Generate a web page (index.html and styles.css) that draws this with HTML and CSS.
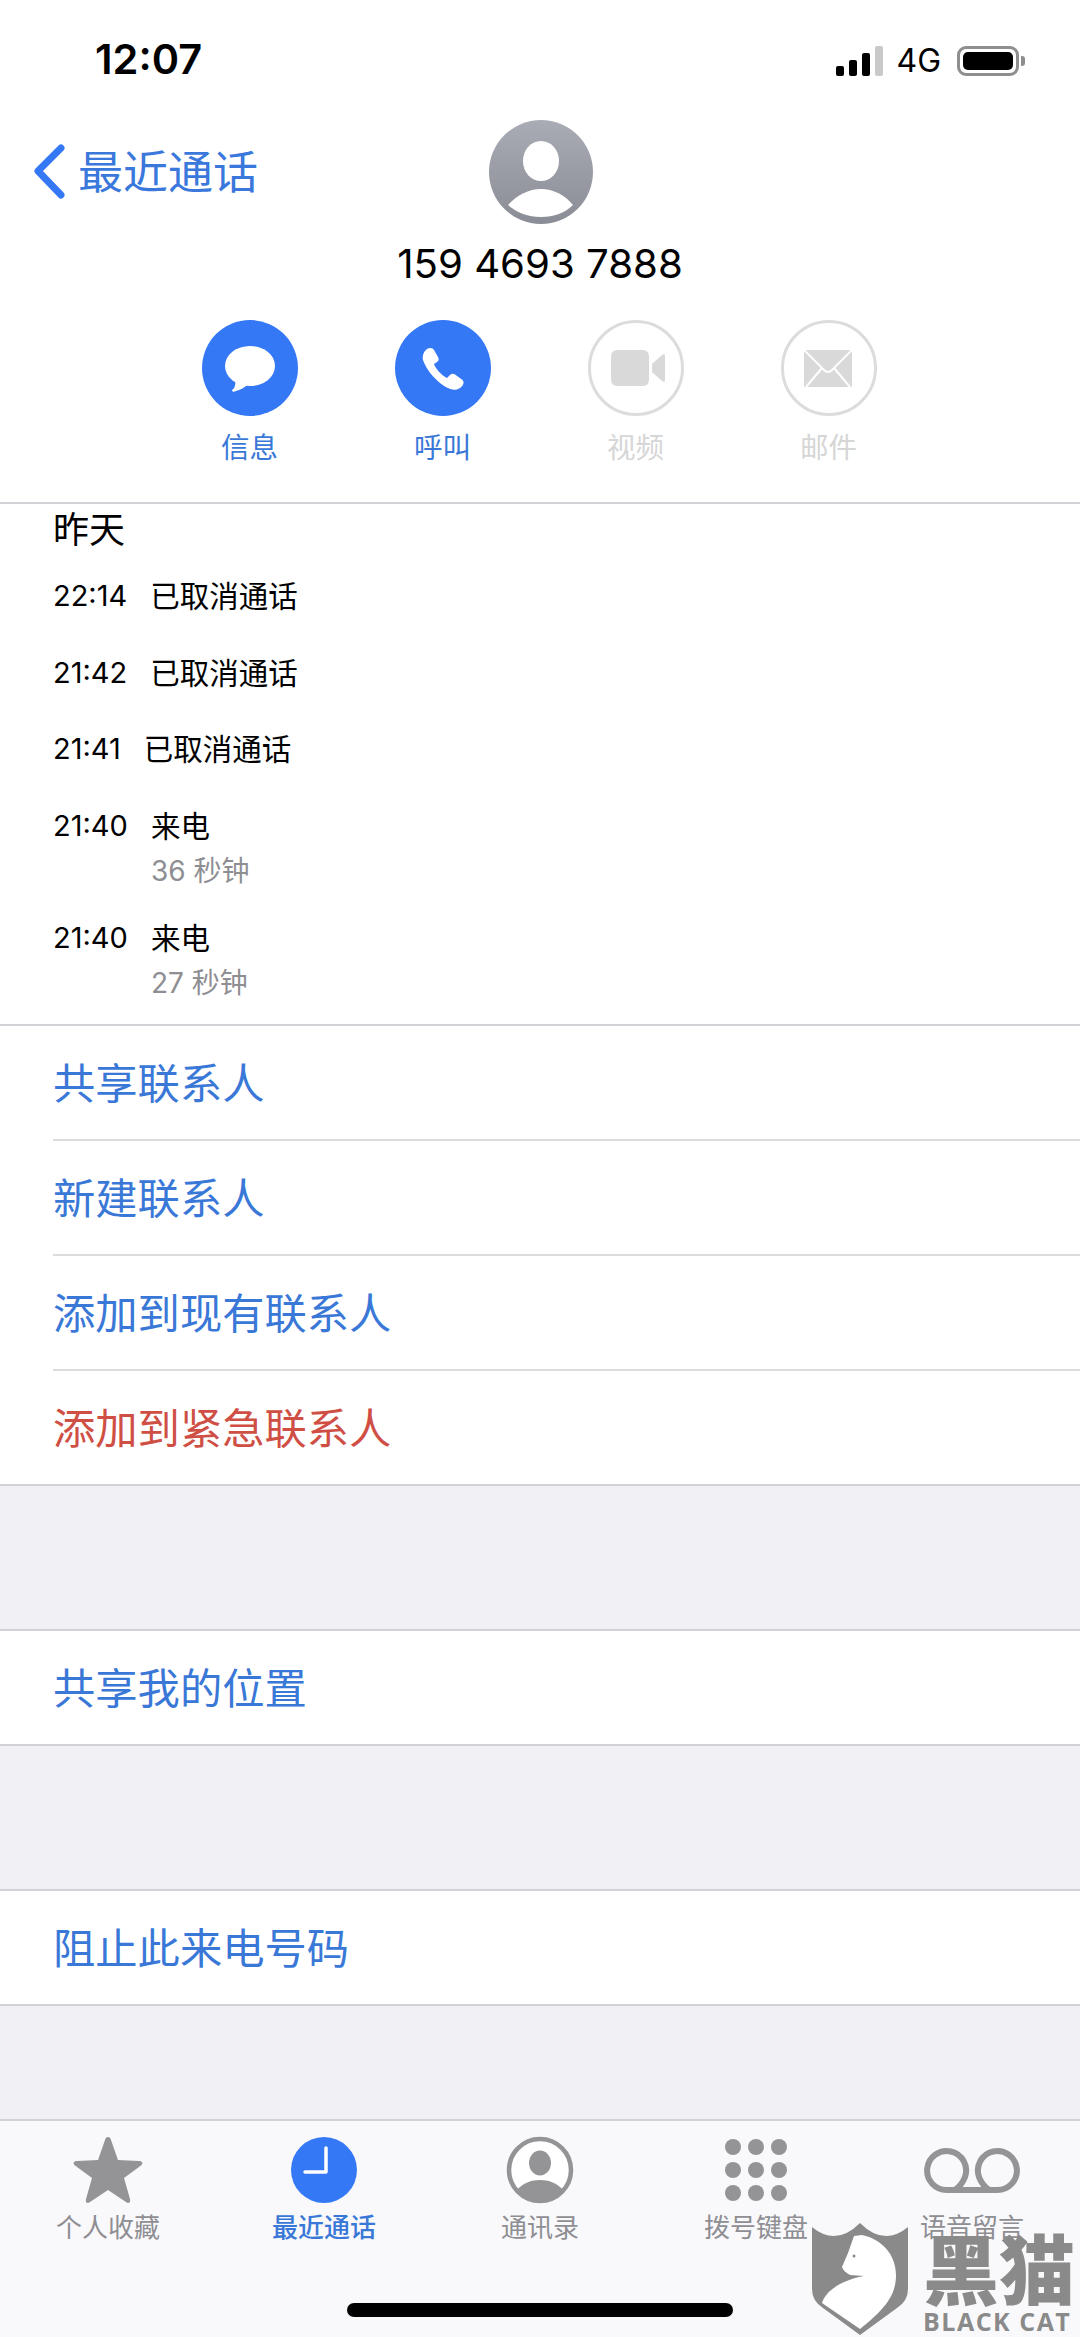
FILE: index.html
```html
<!DOCTYPE html>
<html lang="zh-CN">
<head>
    <meta charset="UTF-8">
    <meta name="viewport" content="width=device-width, initial-scale=1.0">
    <title>最近通话</title>
    <link rel="stylesheet" href="styles.css">
</head>
<body>
<div class="screen">

    <!-- Barre d'état -->
    <div class="status-bar">
        <span class="clock">12:07</span>
        <div class="status-right">
            <div class="signal">
                <i class="bar bar-1"></i><i class="bar bar-2"></i><i class="bar bar-3"></i><i class="bar bar-4"></i>
            </div>
            <span class="network">4G</span>
            <div class="battery"><i class="battery-level"></i></div>
            <i class="battery-nub"></i>
        </div>
    </div>

    <header class="contact-header">
        <div class="top-row">
            <a class="back-link" href="#">
                <svg class="chevron" width="34" height="58" viewBox="0 0 34 58">
                    <path d="M28 5 L5 28 L28 52" fill="none" stroke="#3478f6" stroke-width="7" stroke-linecap="round" stroke-linejoin="round"/>
                </svg>
                <span class="back-label">最近通话</span>
            </a>
            <svg class="avatar" width="104" height="104" viewBox="0 0 104 104">
                <defs>
                    <linearGradient id="avatar-fill" x1="0" y1="0" x2="0" y2="1">
                        <stop offset="0" stop-color="#a9acb5"/>
                        <stop offset="1" stop-color="#8a8d96"/>
                    </linearGradient>
                </defs>
                <circle cx="52" cy="52" r="52" fill="url(#avatar-fill)"/>
                <ellipse cx="52" cy="41" rx="18" ry="20" fill="#fff"/>
                <path d="M19 85 C28 75 40 69 52 69 S76 75 84 85 C76 93 65 97 52 97 S28 93 19 85Z" fill="#fff"/>
            </svg>
        </div>
        <div class="phone-number">159 4693 7888</div>
        <div class="actions">
            <div class="action">
                <svg class="action-icon" width="96" height="96" viewBox="0 0 96 96">
                    <circle cx="48" cy="48" r="48" fill="#3478f6"/>
                    <ellipse cx="48" cy="46" rx="25" ry="20" fill="#fff"/>
                    <path d="M33 58 C34 64 33 68 30 70 C30 72 32 72 34 71 C38 70 42 68 46 64Z" fill="#fff"/>
                </svg>
                <span>信息</span>
            </div>
            <div class="action">
                <svg class="action-icon" width="96" height="96" viewBox="0 0 96 96">
                    <circle cx="48" cy="48" r="48" fill="#3478f6"/>
                    <path d="M32 29 C35 27 38 28 39 30 L43 37 C44 39 44 41 42 42 L39 44 C41 49 46 55 52 58 L55 55 C56.500 53.500 58.500 53.500 60 54.500 L67 59.500 C69 61 69 63.500 67.500 65.500 C65.500 68.500 61.500 70.500 57.500 69.500 C46 67 32 52 28 40 C27 36 29 31 32 29Z" fill="#fff"/>
                </svg>
                <span>呼叫</span>
            </div>
            <div class="action action-off">
                <svg class="action-icon" width="96" height="96" viewBox="0 0 96 96">
                    <circle cx="48" cy="48" r="46.500" fill="none" stroke="#dcdcdc" stroke-width="3"/>
                    <rect x="23" y="30" width="38" height="36" rx="6" fill="#d9d9d9"/>
                    <path d="M64 44 L74 35 C76 33.500 77 34.500 77 36 V60 C77 61.500 76 62.500 74 61 L64 52 Z" fill="#d9d9d9"/>
                </svg>
                <span>视频</span>
            </div>
            <div class="action action-off">
                <svg class="action-icon" width="96" height="96" viewBox="0 0 96 96">
                    <circle cx="48" cy="48" r="46.500" fill="none" stroke="#dcdcdc" stroke-width="3"/>
                    <rect x="23" y="30" width="48" height="37" fill="#d9d9d9"/>
                    <path d="M23 30 L43 50 Q47 54 51 50 L71 30 M25 67 L41 48 M69 67 L53 48" fill="none" stroke="#fff" stroke-width="2"/>
                </svg>
                <span>邮件</span>
            </div>
        </div>
    </header>

    <!-- Historique des appels -->
    <section class="calls">
        <h2 class="calls-day">昨天</h2>
        <div class="call-row">
            <span class="call-time">22:14</span>
            <div class="call-info"><div class="call-title">已取消通话</div></div>
        </div>
        <div class="call-row">
            <span class="call-time">21:42</span>
            <div class="call-info"><div class="call-title">已取消通话</div></div>
        </div>
        <div class="call-row">
            <span class="call-time">21:41</span>
            <div class="call-info"><div class="call-title">已取消通话</div></div>
        </div>
        <div class="call-row call-row-long">
            <span class="call-time">21:40</span>
            <div class="call-info">
                <div class="call-title">来电</div>
                <div class="call-length">36 秒钟</div>
            </div>
        </div>
        <div class="call-row call-row-long">
            <span class="call-time">21:40</span>
            <div class="call-info">
                <div class="call-title">来电</div>
                <div class="call-length">27 秒钟</div>
            </div>
        </div>
    </section>

    <ul class="group group-first">
        <li class="group-item">共享联系人</li>
        <li class="group-item">新建联系人</li>
        <li class="group-item">添加到现有联系人</li>
        <li class="group-item danger">添加到紧急联系人</li>
    </ul>

    <ul class="group">
        <li class="group-item">共享我的位置</li>
    </ul>

    <ul class="group group-last">
        <li class="group-item">阻止此来电号码</li>
    </ul>

    <nav class="tab-bar">
        <div class="tabs">
            <div class="tab">
                <svg width="72" height="72" viewBox="0 0 72 72">
                    <path d="M36 3 C37.500 3 38.500 4 39 6 L46 26 L67 27 C70.500 27 71.500 29.500 69 31.500 L52 44 L58 65 C59 68.500 56.500 70 54 68 L36 56 L18 68 C15.500 70 13 68.500 14 65 L20 44 L3 31.500 C0.500 29.500 1.500 27 5 27 L26 26 L33 6 C33.500 4 34.500 3 36 3Z" fill="#949496"/>
                </svg>
                <span>个人收藏</span>
            </div>
            <div class="tab tab-active">
                <svg width="72" height="72" viewBox="0 0 72 72">
                    <circle cx="36" cy="36" r="33" fill="#3478f6"/>
                    <path d="M38 14 V38 H17" fill="none" stroke="#fff" stroke-width="3.500" stroke-linecap="round" stroke-linejoin="round"/>
                </svg>
                <span>最近通话</span>
            </div>
            <div class="tab">
                <svg width="72" height="72" viewBox="0 0 72 72">
                    <circle cx="36" cy="36" r="31" fill="#fff" stroke="#949496" stroke-width="4.500"/>
                    <ellipse cx="36" cy="29" rx="11" ry="12.500" fill="#949496"/>
                    <path d="M13 56 C19 49 27 46 36 46 S53 49 59 56 C54 64 45 67 36 67 S18 64 13 56Z" fill="#949496"/>
                </svg>
                <span>通讯录</span>
            </div>
            <div class="tab">
                <svg width="72" height="72" viewBox="0 0 72 72">
                    <g fill="#949496">
                        <circle cx="13" cy="13" r="8"/><circle cx="36" cy="13" r="8"/><circle cx="59" cy="13" r="8"/>
                        <circle cx="13" cy="36" r="8"/><circle cx="36" cy="36" r="8"/><circle cx="59" cy="36" r="8"/>
                        <circle cx="13" cy="59" r="8"/><circle cx="36" cy="59" r="8"/><circle cx="59" cy="59" r="8"/>
                    </g>
                </svg>
                <span>拨号键盘</span>
            </div>
            <div class="tab">
                <svg width="100" height="72" viewBox="0 0 100 72">
                    <path d="M25 56 H75 A19.500 19.500 0 1 0 57 43 Q60 51 67 56 M25 56 A19.500 19.500 0 1 1 43 43 Q40 51 33 56" fill="none" stroke="#949496" stroke-width="6"/>
                </svg>
                <span>语音留言</span>
            </div>
        </div>
        <div class="home-bar"></div>
    </nav>

    <!-- Filigrane par-dessus la barre -->
    <div class="watermark">
        <svg class="watermark-shield" width="96" height="112" viewBox="0 0 96 112">
            <path d="M0 4 Q24 24 48 0 Q72 24 96 4 V66 Q96 78 85 85 L48 112 L11 85 Q0 78 0 66Z" fill="#8a8a8a"/>
            <path d="M42 13 L50 12 C70 16 84 32 84 52 C84 70 76 84 48 106 L10 80 C14 66 34 56 52 53 L38 52 C34 50 31 47 30 44 L36 30 Z" fill="#fff"/>
            <circle cx="42" cy="33" r="1.500" fill="#8a8a8a"/>
        </svg>
        <div class="watermark-text">
            <div class="watermark-cn">黑猫</div>
            <div class="watermark-en">BLACK CAT</div>
        </div>
    </div>

</div>
</body>
</html>
```
FILE: styles.css
```css
* {
    box-sizing: border-box;
}

body {
    margin: 0;
    padding: 0;
    background-color: #fff;
    font-family: Inter, "Noto Sans CJK SC", sans-serif;
    color: #000;
}

.screen {
    position: relative;
    width: 1080px;
    height: 2337px;
    overflow: hidden;
    display: flex;
    flex-direction: column;
    background-color: #f0f0f5;
}

/* status bar */
.status-bar {
    height: 120px;
    flex: none;
    padding: 35px 55px 0 95px;
    display: flex;
    justify-content: space-between;
    align-items: flex-start;
    background-color: #fff;
}

.clock {
    font-size: 41.5px;
    font-weight: 600;
    line-height: 48px;
}

.status-right {
    display: flex;
    align-items: center;
    height: 48px;
    margin-top: 2px;
}

.signal {
    display: flex;
    align-items: flex-end;
    gap: 5px;
    height: 30px;
    margin-right: 13px;
}

.bar {
    display: block;
    width: 8px;
    border-radius: 2px;
    background-color: #000;
}

.bar-1 { height: 10px; }
.bar-2 { height: 16px; }
.bar-3 { height: 23px; }
.bar-4 { height: 30px; background-color: #c9c9c9; }

.network {
    font-size: 32px;
    line-height: 48px;
    margin-right: 16px;
}

.battery {
    width: 62px;
    height: 30px;
    padding: 3px;
    border: 3px solid #8e8e8e;
    border-radius: 9px;
}

.battery-level {
    display: block;
    width: 100%;
    height: 100%;
    border-radius: 5px;
    background-color: #000;
}

.battery-nub {
    display: block;
    width: 4px;
    height: 10px;
    margin-left: 2px;
    border-radius: 0 3px 3px 0;
    background-color: #8e8e8e;
}

/* contact */
.contact-header {
    flex: none;
    height: 384px;
    background-color: #fff;
    border-bottom: 2px solid #d2d2d6;
}

.top-row {
    display: grid;
    grid-template-columns: 1fr 104px 1fr;
    align-items: center;
    height: 104px;
}

.back-link {
    display: flex;
    align-items: center;
    gap: 11px;
    padding-left: 33px;
    color: #3a78dc;
    text-decoration: none;
    font-size: 45px;
}

.back-label {
    margin-bottom: 5px;
}

.chevron {
    display: block;
}

.avatar {
    display: block;
    margin-left: 1px;
}

.phone-number {
    text-align: center;
    font-size: 40.2px;
    line-height: 50px;
    margin-top: 15px;
}

.actions {
    display: flex;
    justify-content: center;
    gap: 97px;
    margin-top: 31px;
    padding-right: 2px;
}

.action {
    width: 96px;
    display: flex;
    flex-direction: column;
    align-items: center;
    color: #3a78d8;
    font-size: 28.5px;
    line-height: 40px;
}

.action-icon {
    display: block;
    margin-bottom: 12px;
}

.action-off {
    color: #d6d6d6;
}

/* calls */
.calls {
    flex: none;
    background-color: #fff;
    padding: 0 0 0 53px;
}

.calls-day {
    margin: 0 0 20px;
    font-size: 36px;
    font-weight: 400;
    line-height: 52px;
}

.call-row {
    display: flex;
    gap: 23px;
    height: 76.5px;
}

.call-row-long {
    height: 112px;
}

.call-row-long:last-child {
    height: 106.5px;
}

.call-time {
    font-size: 29px;
    line-height: 40px;
}

.call-title {
    font-size: 29.5px;
    line-height: 40px;
}

.call-length {
    font-size: 28px;
    line-height: 44px;
    margin-top: 3px;
    color: #8e8e93;
}

/* grouped lists */
.group {
    list-style-type: none;
    margin: 0 0 143px;
    padding: 0;
    background-color: #fff;
    border-top: 2px solid #d2d2d6;
    border-bottom: 2px solid #d2d2d6;
    flex: none;
}

.group-last {
    margin-bottom: 0;
}

.group-item {
    height: 113px;
    margin-left: 53px;
    font-size: 42.3px;
    line-height: 116px;
    color: #3a78d8;
}

.group-first .group-item {
    height: 115px;
    border-bottom: 2px solid #dcdcdf;
}

.group-first .group-item:last-child {
    border-bottom: none;
    height: 113px;
}

.danger {
    color: #cf4f45;
}

/* tab bar */
.tab-bar {
    margin-top: auto;
    height: 218px;
    flex: none;
    background-color: #f9f9fb;
    border-top: 2px solid #d2d2d6;
}

.tabs {
    display: grid;
    grid-template-columns: repeat(5, 216px);
    padding-top: 13px;
}

.tab {
    display: flex;
    flex-direction: column;
    align-items: center;
    color: #8e8e93;
    font-size: 26px;
    line-height: 36px;
}

.tab svg {
    display: block;
    margin-bottom: 4px;
}

.tab-active {
    color: #3a78d8;
    font-weight: 500;
}

.home-bar {
    width: 386px;
    height: 14px;
    margin: 57px auto 0;
    border-radius: 7px;
    background-color: #000;
}

/* watermark */
.watermark {
    position: absolute;
    left: 812px;
    top: 2223px;
    display: flex;
    gap: 15px;
}

.watermark-shield {
    display: block;
}

.watermark-text {
    color: #8a8a8a;
    font-family: "Noto Sans CJK SC", sans-serif;
    font-weight: 900;
    width: 152px;
}

.watermark-cn {
    font-size: 76px;
    line-height: 86px;
    white-space: nowrap;
}

.watermark-en {
    font-family: "Open Sans", sans-serif;
    font-weight: 700;
    font-size: 25px;
    letter-spacing: 1.500px;
    line-height: 25px;
    white-space: nowrap;
}
```
